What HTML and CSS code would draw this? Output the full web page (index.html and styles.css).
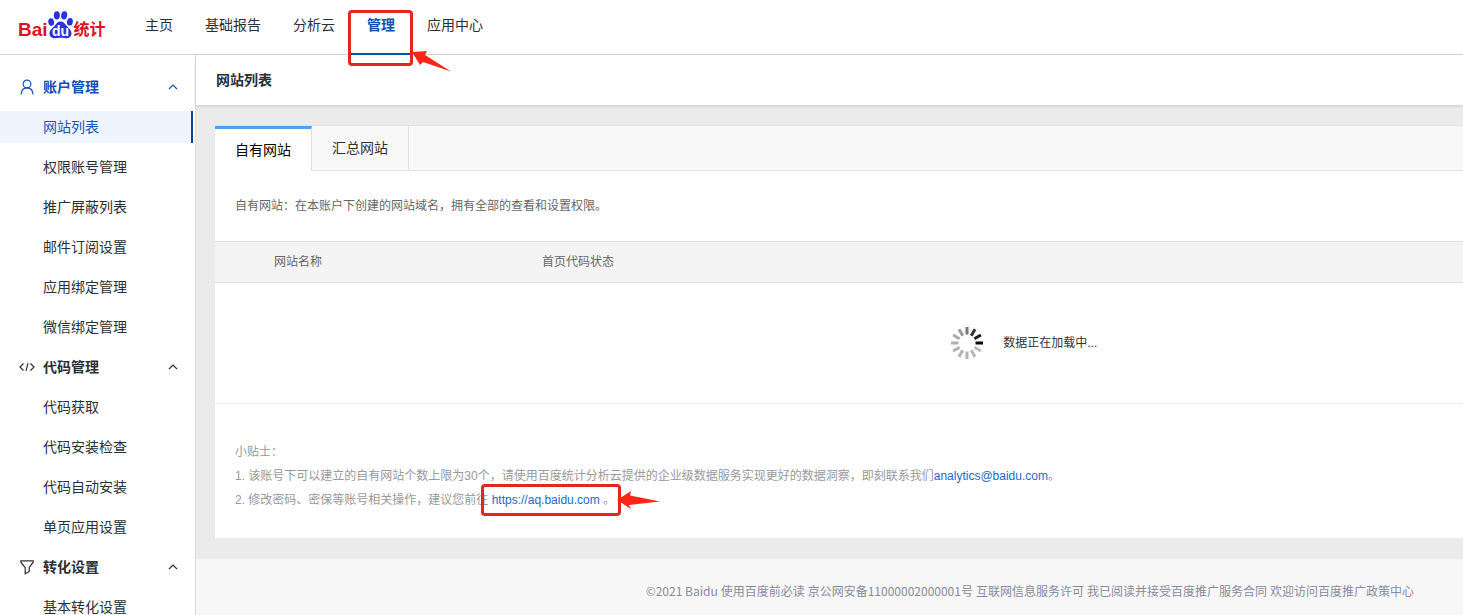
FILE: index.html
```html
<!DOCTYPE html>
<html lang="zh-CN">
<head>
<meta charset="utf-8">
<title>百度统计 - 网站列表</title>
<link rel="stylesheet" href="styles.css">
</head>
<body>
<header class="header">
  <a class="logo" href="#">
    <span class="logo-latin">Bai</span>
    <svg class="logo-paw" width="26" height="28" viewBox="0 0 26 28">
      <g fill="#2a32dc">
        <ellipse cx="3.2" cy="11" rx="2.9" ry="3.8" transform="rotate(-12 3.2 11)"/>
        <ellipse cx="8.8" cy="4.4" rx="3" ry="4.1"/>
        <ellipse cx="16.2" cy="4.4" rx="3" ry="4.1" transform="rotate(8 16.2 4.4)"/>
        <ellipse cx="21.9" cy="10.8" rx="2.9" ry="3.8" transform="rotate(12 21.9 10.8)"/>
        <path d="M12.5 10.500c3 0 4.300 2 6 4.300 2 2.400 5 4 5 7.700 0 3.600-3 5-6 4.700-2-.2-3.200-.4-5-.4s-3 .2-5 .4c-3 .3-6-1.200-6-4.700 0-3.700 3.400-5.300 5.200-7.700 1.700-2.300 2.800-4.300 5.800-4.300z"/>
      </g>
      <text class="logo-du" x="12.5" y="25" text-anchor="middle">du</text>
    </svg>
    <span class="logo-cn">统计</span>
  </a>
  <nav class="nav">
    <a href="#">主页</a>
    <a href="#">基础报告</a>
    <a href="#">分析云</a>
    <a class="active" href="#">管理
      <span class="mark mark-nav"></span>
      <svg class="arrow arrow-nav" width="40" height="22" viewBox="0 0 40 22"><path d="M0 1 15 0 13 4 39 20.500 11 11 8 14z" fill="#fb2617"/></svg>
    </a>
    <a href="#">应用中心</a>
  </nav>
</header>
<div class="body">
  <aside class="sidebar">
    <button class="group current" type="button">
      <svg class="icon" width="16" height="16" viewBox="0 0 16 16"><circle cx="8" cy="5" r="3.900"/><path d="M2 15.500c.2-4 2.400-6.600 6-6.600s5.800 2.600 6 6.600"/></svg>
      <span>账户管理</span>
      <svg class="chevron" width="10" height="6" viewBox="0 0 10 6"><path d="M1 5 5 1l4 4"/></svg>
    </button>
    <a class="item selected" href="#">网站列表</a>
    <a class="item" href="#">权限账号管理</a>
    <a class="item" href="#">推广屏蔽列表</a>
    <a class="item" href="#">邮件订阅设置</a>
    <a class="item" href="#">应用绑定管理</a>
    <a class="item" href="#">微信绑定管理</a>
    <button class="group" type="button">
      <svg class="icon" width="16" height="16" viewBox="0 0 16 16"><path d="M4.500 4.500 1 8l3.500 3.500M11.500 4.500 15 8l-3.500 3.500M9 4.200 7 11.800"/></svg>
      <span>代码管理</span>
      <svg class="chevron" width="10" height="6" viewBox="0 0 10 6"><path d="M1 5 5 1l4 4"/></svg>
    </button>
    <a class="item" href="#">代码获取</a>
    <a class="item" href="#">代码安装检查</a>
    <a class="item" href="#">代码自动安装</a>
    <a class="item" href="#">单页应用设置</a>
    <button class="group" type="button">
      <svg class="icon" width="16" height="16" viewBox="0 0 16 16"><path d="M1.800 1.800h12.400v1.400L10.200 8.500v4l-4 2.200V8.500L1.800 3.200z"/></svg>
      <span>转化设置</span>
      <svg class="chevron" width="10" height="6" viewBox="0 0 10 6"><path d="M1 5 5 1l4 4"/></svg>
    </button>
    <a class="item" href="#">基本转化设置</a>
  </aside>
  <main class="main">
    <h1 class="title">网站列表</h1>
    <section class="card">
      <div class="tabs" role="tablist">
        <button class="tab on" type="button" role="tab" aria-selected="true">自有网站</button>
        <button class="tab" type="button" role="tab" aria-selected="false">汇总网站</button>
      </div>
      <p class="intro">自有网站：在本账户下创建的网站域名，拥有全部的查看和设置权限。</p>
      <table class="sites">
        <thead><tr><th class="col-check"></th><th class="col-name">网站名称</th><th>首页代码状态</th></tr></thead>
        <tbody><tr><td colspan="3">
          <div class="loading">
            <svg width="32" height="32" viewBox="-16 -16 32 32" stroke-width="3" stroke-linecap="butt">
              <path d="M8.500 0H16" stroke="#000"/>
              <path d="M8.500 0H16" stroke="#bbb" transform="rotate(30)"/>
              <path d="M8.500 0H16" stroke="#b8b8b8" transform="rotate(60)"/>
              <path d="M8.500 0H16" stroke="#b4b4b4" transform="rotate(90)"/>
              <path d="M8.500 0H16" stroke="#b2b2b2" transform="rotate(120)"/>
              <path d="M8.500 0H16" stroke="#b0b0b0" transform="rotate(150)"/>
              <path d="M8.500 0H16" stroke="#b0b0b0" transform="rotate(180)"/>
              <path d="M8.500 0H16" stroke="#aaa" transform="rotate(210)"/>
              <path d="M8.500 0H16" stroke="#999" transform="rotate(240)"/>
              <path d="M8.500 0H16" stroke="#777" transform="rotate(270)"/>
              <path d="M8.500 0H16" stroke="#333" transform="rotate(300)"/>
              <path d="M8.500 0H16" stroke="#1c1c1c" transform="rotate(330)"/>
            </svg>
            <span>数据正在加载中...</span>
          </div>
        </td></tr></tbody>
      </table>
      <div class="tips">
        <p>小贴士：</p>
        <p>1. 该账号下可以建立的自有网站个数上限为30个，请使用百度统计分析云提供的企业级数据服务实现更好的数据洞察，即刻联系我们<a href="#">analytics@baidu.com</a>。</p>
        <p>2. 修改密码、密保等账号相关操作，建议您前往 <span class="anchor"><a href="#">https://aq.baidu.com</a> 。<span class="mark mark-link"></span><svg class="arrow arrow-link" width="44" height="18" viewBox="0 0 44 18"><path d="M0 9 14 0 13 4.500 43 10.500 12 14 14 18z" fill="#fb2617"/></svg></span></p>
      </div>
    </section>
    <footer class="footer">
      <span>©2021 Baidu</span>
      <a href="#">使用百度前必读</a>
      <a href="#">京公网安备11000002000001号</a>
      <a href="#">互联网信息服务许可</a>
      <a href="#">我已阅读并接受百度推广服务合同</a>
      <a href="#">欢迎访问百度推广政策中心</a>
    </footer>
  </main>
</div>
</body>
</html>
```

FILE: styles.css
```css
* { box-sizing: border-box; }

body {
  margin: 0;
  height: 100vh;
  overflow: hidden;
  display: flex;
  flex-direction: column;
  background: #fff;
  color: #2b2f36;
  font: 14px/20px "Liberation Sans", "Noto Sans CJK SC", sans-serif;
}

a { color: inherit; text-decoration: none; }
p { margin: 0; }
button {
  border: 0;
  background: none;
  padding: 0;
  color: inherit;
  font: inherit;
  text-align: left;
  cursor: pointer;
}

.header {
  display: flex;
  flex: none;
  height: 55px;
  border-bottom: 1px solid #d4d4d4;
}

.logo {
  display: flex;
  align-items: flex-start;
  width: 129px;
  padding: 11px 0 0 18px;
  color: #dc1420;
  font-weight: bold;
}
.logo-latin { font-size: 19px; line-height: 38px; }
.logo-cn { font-size: 16px; line-height: 38px; white-space: nowrap; }
.logo-paw { flex: none; }
.logo-du { fill: #fff; font: bold 14px "Liberation Sans", sans-serif; }

.nav { display: flex; }
.nav > a {
  position: relative;
  height: 55px;
  padding: 15px 16px 0;
  white-space: nowrap;
}
.nav > .active {
  border-bottom: 2px solid #0f4fb0;
  color: #0f4fb0;
  font-weight: bold;
}

.mark {
  position: absolute;
  border: 3px solid #e3261f;
  border-radius: 4px;
  pointer-events: none;
  z-index: 2;
}
.mark-nav { inset: 10px -2px -13px -3px; }
.mark-link { inset: -7px -6px -7px -11px; }
.arrow { position: absolute; z-index: 3; }
.arrow-nav { left: 61px; top: 51px; }
.arrow-link { left: calc(100% + 2px); top: 0; }

.body { display: flex; flex: 1; min-height: 0; }

.sidebar {
  display: flex;
  flex: none;
  flex-direction: column;
  gap: 8px;
  width: 196px;
  padding: 16px 2px 0 0;
  border-right: 1px solid #dcdcdc;
  overflow: hidden;
}
.group, .item { flex: none; height: 32px; line-height: 32px; }
.group {
  display: flex;
  align-items: center;
  gap: 8px;
  padding: 0 15px 0 19px;
  font-weight: bold;
}
.current { color: #1450b4; }
.icon, .chevron { fill: none; stroke: currentColor; stroke-width: 1.2; }
.chevron { margin-left: auto; }
.item { padding-left: 43px; }
.selected {
  border-right: 2px solid #12439c;
  background: #eef5fe;
  color: #1a56b8;
}

.main {
  display: flex;
  flex: 1;
  flex-direction: column;
  min-width: 0;
  background: #ebebeb;
}
.title {
  margin: 0;
  padding: 15px 20px;
  background: #fff;
  box-shadow: 0 1px 3px #c8c8c8;
  font-size: 14px;
  line-height: 20px;
}

.card {
  margin: 20px 0 21px 19px;
  background: #fff;
  color: #666;
  font-size: 12px;
}
.tabs {
  display: flex;
  height: 46px;
  border-top: 1px solid #e2e2e2;
  border-bottom: 1px solid #e0e0e0;
  background: #f8f8f8;
  font-size: 14px;
}
.tab {
  padding: 0 20px;
  border-right: 1px solid #e0e0e0;
  color: #333;
}
.on {
  height: 45px;
  border-top: 3px solid #569fe8;
  background: #fff;
  color: #000;
}
.intro { padding: 25px 20px; }

.sites {
  width: 100%;
  border-collapse: collapse;
  table-layout: fixed;
}
.sites th {
  height: 41px;
  padding: 0;
  border: solid #e0e0e0;
  border-width: 1px 0;
  background: #f4f4f4;
  font-weight: normal;
  text-align: left;
}
.col-check { width: 59px; }
.col-name { width: 268px; }
.sites td { padding: 0; border-bottom: 1px solid #eee; }
.loading {
  display: flex;
  align-items: center;
  gap: 20px;
  height: 120px;
  margin-left: 59%;
  color: #333;
}

.tips {
  padding: 36px 20px 26px;
  color: #999;
  line-height: 24px;
  white-space: nowrap;
}
.tips a { color: #1e6ac8; }
.anchor { position: relative; display: inline-block; line-height: 18px; }

.footer {
  display: flex;
  flex: 1;
  justify-content: flex-end;
  gap: 3px;
  padding: 22px 49px 0 20px;
  background: #f7f7f7;
  color: #868c9c;
  font: 12px/20px "Noto Sans CJK SC", sans-serif;
  white-space: nowrap;
}
```
